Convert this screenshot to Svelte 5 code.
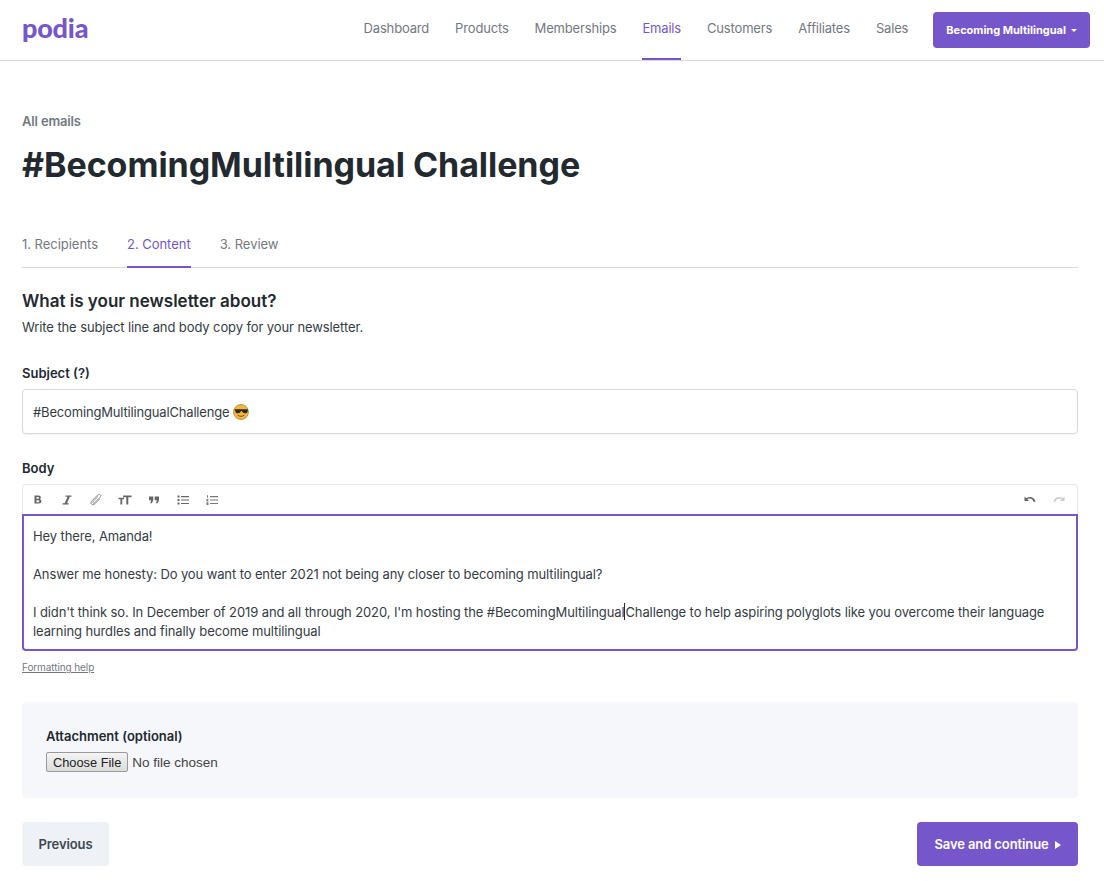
<script lang="ts">
	const navItems = ['Dashboard', 'Products', 'Memberships', 'Emails', 'Customers', 'Affiliates', 'Sales'];
	const steps = ['1. Recipients', '2. Content', '3. Review'];
</script>

<header class="topbar">
	<a href="#top" class="logo">podia</a>
	<nav class="nav">
		{#each navItems as item}
			<a href="#top" class="nav-link" class:active={item === 'Emails'}>{item}</a>
		{/each}
		<button class="site-btn">
			Becoming Multilingual
			<span class="caret"></span>
		</button>
	</nav>
</header>

<main class="page">
	<a href="#top" class="back">All emails</a>
	<h1 class="title">#BecomingMultilingual Challenge</h1>

	<div class="steps">
		{#each steps as step}
			<span class="step" class:current={step === '2. Content'}>{step}</span>
		{/each}
	</div>

	<h2 class="section-title">What is your newsletter about?</h2>
	<p class="section-sub">Write the subject line and body copy for your newsletter.</p>

	<label class="label" for="subject">Subject (?)</label>
	<div class="subject" id="subject">
		#BecomingMultilingualChallenge
		<svg class="emoji" viewBox="0 0 16 16" width="16" height="16">
			<circle cx="8" cy="8" r="7.5" fill="#f5b73c" stroke="#9a6a1c" stroke-width="0.6" />
			<path d="M1.2 5.2h13.6v1.2c0 2-1.2 2.8-2.9 2.8-1.7 0-2.6-1-3-2.2h-.8c-.4 1.2-1.3 2.2-3 2.2-1.7 0-2.9-.8-2.9-2.8z" fill="#2a2a2a" />
			<path d="M5 11.4c1.800 1.300 4.200 1.300 6 0" fill="none" stroke="#6b4310" stroke-width="0.9" stroke-linecap="round" />
		</svg>
	</div>

	<div class="label body-label">Body</div>
	<div class="toolbar">
		<div class="tools">
			<svg class="tool" viewBox="0 0 12 12"><path d="M2.500 1.500h3.800c1.600 0 2.600.8 2.600 2.100 0 .8-.4 1.400-1.100 1.700 1 .3 1.600 1 1.600 2 0 1.500-1.100 2.200-2.800 2.200H2.500zm2 1.600v1.700h1.400c.6 0 1-.3 1-.9s-.4-.8-1-.8zm0 3.200v1.900h1.700c.7 0 1.100-.3 1.100-1 0-.6-.4-.9-1.100-.9z" fill="#666" /></svg>
			<svg class="tool" viewBox="0 0 12 12"><path d="M4.500 1.500h6v1.300H8.800L6 9.200h1.700v1.300H1.500V9.200h2.200l2.800-6.400h-2z" fill="#666" /></svg>
			<svg class="tool" viewBox="0 0 12 12"><path d="M8 2.500 3.200 7.300c-.6.600-.6 1.200-.2 1.600s1 .4 1.600-.2l5.300-5.300c1-1 1-2 .3-2.600s-1.700-.6-2.600.3L2 6.700c-1.300 1.300-1.300 2.700-.5 3.500s2.200.8 3.400-.4L9.700 5" fill="none" stroke="#808080" stroke-width="0.9" /></svg>
			<svg class="tool tool-wide" viewBox="0 0 14 12"><path d="M5 1.500h8.500v1.700h-3.200v7.300H8.300V3.200H5zM.5 3.800h5.500v1.500H4.200v5.200H2.400V5.300H.5z" fill="#666" /></svg>
			<svg class="tool" viewBox="0 0 12 12"><path d="M1 2.500h4.300v3.700L3.900 9.300H2.200l1-3H1zM6.700 2.500H11v3.700L9.600 9.300H7.900l1-3H6.700z" fill="#666" /></svg>
			<svg class="tool" viewBox="0 0 12 12"><path d="M.5 1.500h2v2h-2zM.5 5h2v2h-2zM.5 8.500h2v2h-2zM4 2h8v1.200H4zM4 5.400h8v1.200H4zM4 8.900h8v1.200H4z" fill="#666" /></svg>
			<svg class="tool" viewBox="0 0 12 12"><path d="M1 1.200h1v2.600H1zM.5 5h2v.8l-1 1h1v.7h-2zM.5 8.300h2v2.700h-2zM4 2h8v1.200H4zM4 5.400h8v1.200H4zM4 8.900h8v1.200H4z" fill="#777" /></svg>
		</div>
		<div class="history">
			<svg class="tool" viewBox="0 0 12 12"><path d="M.5 2.500v4.500H5L3.300 5.300C5.800 3.800 8.600 4.800 9.700 8l1.800-.6C10.200 3 6 1.500 2.300 4.300z" fill="#666" /></svg>
			<svg class="tool" viewBox="0 0 12 12"><path d="M11.500 2.500v4.500H7l1.700-1.700C6.200 3.800 3.400 4.800 2.300 8l-1.800-.6C1.800 3 6 1.500 9.700 4.300z" fill="#ccc" /></svg>
		</div>
	</div>
	<div class="editor">
		<p>Hey there, Amanda!</p>
		<p>Answer me honesty: Do you want to enter 2021 not being any closer to becoming multilingual?</p>
		<p>I didn't think so. In December of 2019 and all through 2020, I'm hosting the #BecomingMultilingual<span class="cursor"></span>Challenge to help aspiring polyglots like you overcome their language learning hurdles and finally become multilingual</p>
	</div>
	<a href="#top" class="help">Formatting help</a>

	<div class="attachment">
		<label class="label attach-label" for="file">Attachment (optional)</label>
		<input id="file" class="file" type="file" />
	</div>

	<div class="actions">
		<button class="btn-secondary">Previous</button>
		<button class="btn-primary">Save and continue <span class="arrow"></span></button>
	</div>
</main>

<style>
	:global(body) {
		font-family: 'Inter', sans-serif;
		color: #22292f;
		background: #fff;
	}

	a {
		text-decoration: none;
		color: inherit;
	}

	.topbar {
		display: flex;
		align-items: center;
		justify-content: space-between;
		height: 60px;
		padding: 0 14px 0 22px;
		border-bottom: 1px solid #d9d9d9;
	}

	.logo {
		font-family: 'Lato', sans-serif;
		font-weight: 900;
		font-size: 27px;
		line-height: 1;
		letter-spacing: -0.2px;
		color: #7657cb;
		padding-bottom: 6px;
	}

	.nav {
		display: flex;
		align-items: center;
		height: 100%;
	}

	.nav-link {
		display: flex;
		align-items: center;
		height: 100%;
		box-sizing: border-box;
		margin-right: 26px;
		padding-bottom: 2px;
		font-size: 13px;
		letter-spacing: -0.17px;
		color: #73797f;
		border-bottom: 2px solid transparent;
	}

	.nav-link:nth-last-of-type(1) {
		margin-right: 25px;
	}

	.nav-link.active {
		color: #7657cb;
		border-bottom-color: #7657cb;
	}

	.site-btn {
		display: flex;
		align-items: center;
		gap: 5px;
		height: 36px;
		padding: 0 13px;
		border: 0;
		border-radius: 4px;
		background: #7657cb;
		color: #fff;
		font-family: inherit;
		font-size: 11px;
		font-weight: 700;
	}

	.caret {
		width: 0;
		height: 0;
		border-left: 3.500px solid transparent;
		border-right: 3.500px solid transparent;
		border-top: 3.500px solid #fff;
	}

	.page {
		padding: 52px 26px 0 22px;
	}

	.back {
		display: block;
		font-size: 13px;
		font-weight: 600;
		line-height: 17px;
		letter-spacing: -0.15px;
		color: #73797f;
	}

	.title {
		margin: 14px 0 0;
		font-size: 34px;
		font-weight: 700;
		line-height: 41px;
		letter-spacing: -0.05px;
	}

	.steps {
		display: flex;
		gap: 29px;
		margin-top: 43px;
		border-bottom: 1px solid #d9d9d9;
	}

	.step {
		padding: 8px 0 13px;
		font-size: 13px;
		letter-spacing: -0.03px;
		line-height: 17px;
		color: #73797f;
		margin-bottom: -1px;
		border-bottom: 2px solid transparent;
	}

	.step.current {
		color: #7657cb;
		border-bottom-color: #7657cb;
	}

	.section-title {
		margin: 23px 0 0;
		font-size: 17px;
		font-weight: 600;
		line-height: 20px;
	}

	.section-sub {
		margin: 8px 0 0;
		font-size: 13px;
		letter-spacing: -0.1px;
		line-height: 17px;
		color: #343c44;
	}

	.label {
		display: block;
		font-size: 13px;
		font-weight: 600;
		line-height: 17px;
		margin-top: 29px;
	}

	.subject {
		display: flex;
		align-items: center;
		gap: 4px;
		box-sizing: border-box;
		height: 45px;
		margin-top: 7px;
		padding: 0 10px;
		border: 1px solid #d9d9d9;
		border-radius: 4px;
		font-size: 13px;
		letter-spacing: -0.17px;
		color: #343c44;
		box-shadow: 0 1px 1px rgba(0, 0, 0, 0.05);
	}

	.emoji {
		flex: none;
	}

	.body-label {
		margin-top: 26px;
	}

	.toolbar {
		display: flex;
		align-items: center;
		justify-content: space-between;
		box-sizing: border-box;
		height: 30px;
		margin-top: 7px;
		padding: 0 12px 0 9px;
		border: 1px solid #e6e6ef;
		border-bottom: 0;
		border-radius: 4px 4px 0 0;
	}

	.tools,
	.history {
		display: flex;
		align-items: center;
	}

	.tools {
		gap: 17px;
	}

	.history {
		gap: 17px;
	}

	.tool {
		width: 12px;
		height: 12px;
	}

	.tool-wide {
		width: 14px;
		margin: 0 -1px;
	}

	.editor {
		box-sizing: border-box;
		height: 137px;
		padding: 11px 9px;
		border: 2px solid #7657cb;
		border-radius: 0 0 4px 4px;
		font-size: 13px;
		letter-spacing: -0.11px;
		line-height: 19px;
		color: #343c44;
	}

	.editor p {
		margin: 0 0 19px;
	}

	.cursor {
		display: inline-block;
		width: 1px;
		height: 17px;
		margin-bottom: -3px;
		background: #22292f;
	}

	.help {
		display: block;
		margin-top: 10px;
		font-size: 10px;
		letter-spacing: -0.1px;
		line-height: 13px;
		color: #73797f;
		text-decoration: underline;
	}

	.attachment {
		box-sizing: border-box;
		height: 96px;
		margin-top: 28px;
		padding: 26px 24px 0;
		background: #f6f7fb;
		border-radius: 4px;
	}

	.attach-label {
		margin-top: 0;
	}

	.file {
		display: block;
		margin-top: 7px;
		font-family: 'Liberation Sans', Arial, sans-serif;
		font-size: 13.500px;
		color: #444;
	}

	.file::file-selector-button {
		height: 20px;
		margin-right: 4px;
		padding: 0 6px;
		border: 1px solid #9a9a9a;
		border-radius: 2px;
		background: linear-gradient(#f4f4f4, #dcdcdc);
		font-family: inherit;
		font-size: 12.800px;
		color: #222;
	}

	.actions {
		display: flex;
		justify-content: space-between;
		margin-top: 24px;
	}

	.btn-secondary,
	.btn-primary {
		height: 44px;
		padding-bottom: 2px;
		border: 0;
		border-radius: 4px;
		font-family: inherit;
		font-size: 13px;
		font-weight: 600;
		letter-spacing: -0.1px;
	}

	.btn-secondary {
		width: 87px;
		background: #eef1f5;
		color: #3d4852;
	}

	.btn-primary {
		display: flex;
		align-items: center;
		justify-content: center;
		gap: 6px;
		width: 161px;
		background: #7657cb;
		color: #fff;
	}

	.arrow {
		width: 0;
		height: 0;
		margin-top: 2px;
		border-top: 4.500px solid transparent;
		border-bottom: 4.500px solid transparent;
		border-left: 6px solid #fff;
	}
</style>
